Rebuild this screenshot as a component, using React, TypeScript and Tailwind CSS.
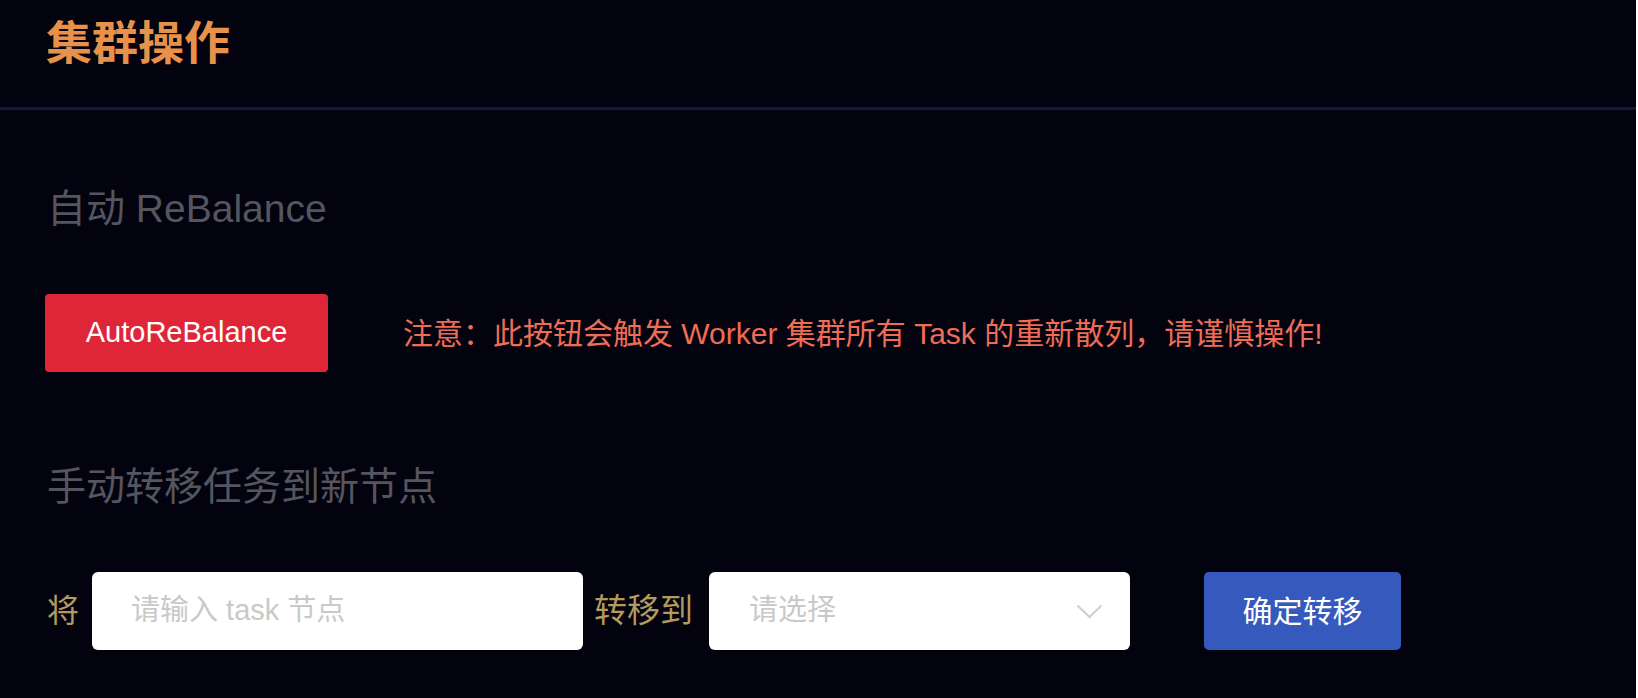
const font = "font-['Liberation_Sans','Noto_Sans_CJK_SC',sans-serif]"

function Chevron() {
  return (
    <svg width="27" height="15" viewBox="0 0 27 15" fill="none" className="text-[#cfcfcf]">
      <path d="M1.5 1.5 L13.5 13 L25.5 1.5" stroke="currentColor" strokeWidth="2" />
    </svg>
  )
}

export default function App() {
  return (
    <div className={`${font} h-[698px] w-full overflow-hidden border-r-2 border-white bg-[#03020f]`}>
      {/* header */}
      <div className="h-[110px] border-b-[3px] border-[#15153f] px-[46px] pt-[15px]">
        <h1 className="text-[46px] font-bold leading-[56px] text-[#e8914a]">集群操作</h1>
      </div>

      <div className="px-[47px]">
        {/* auto rebalance */}
        <h2 className="mt-[75px] text-[39px] leading-[48px] text-[#55555f]">自动 ReBalance</h2>
        <div className="mt-[61px] flex items-center">
          <button className="-ml-[2px] flex h-[78px] w-[283px] items-center justify-center rounded-[4px] bg-[#df2639] text-[29px] text-white">
            AutoReBalance
          </button>
          <p className="ml-[75px] text-[30px] text-[#ef6c55]">
            注意：此按钮会触发 Worker 集群所有 Task 的重新散列，请谨慎操作!
          </p>
        </div>

        {/* manual move */}
        <h2 className="mt-[91px] text-[39px] leading-[48px] text-[#55555f]">手动转移任务到新节点</h2>
        <div className="mt-[61px] flex h-[78px] items-center">
          <span className="text-[32px] text-[#b49a5c]">将</span>
          <div className="ml-[13px] flex h-[78px] w-[491px] items-center rounded-[6px] bg-white px-[39px] text-[29px] text-[#c9c9c9]">
            请输入 task 节点
          </div>
          <span className="ml-[11px] text-[33px] text-[#b49a5c]">转移到</span>
          <div className="ml-[16px] flex h-[78px] w-[421px] items-center justify-between rounded-[6px] bg-white pl-[40px] pr-[27px] text-[29px] text-[#c9c9c9]">
            <span>请选择</span>
            <Chevron />
          </div>
          <button className="ml-[74px] flex h-[78px] w-[197px] items-center justify-center rounded-[5px] bg-[#3659bd] text-[30px] text-white">
            确定转移
          </button>
        </div>
      </div>
    </div>
  )
}
